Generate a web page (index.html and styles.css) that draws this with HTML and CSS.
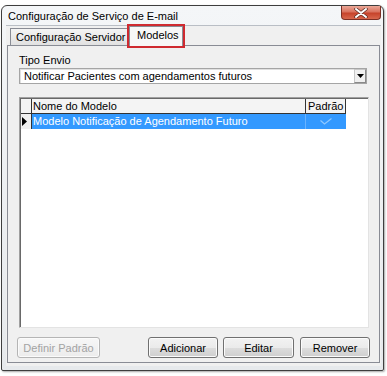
FILE: index.html
```html
<!DOCTYPE html>
<html>
  <head>
    <title>Configuração de Serviço de E-mail</title>
    <link rel="stylesheet" href="styles.css">
  </head>

  <body>
    <div class="window">
      <div class="titlebar">
        <span class="title">Configuração de Serviço de E-mail</span>
        <div class="close">
          <svg width="14" height="10" viewBox="0 0 14 10">
            <path d="M2 1 L12 9 M12 1 L2 9" stroke="#5a2a22" stroke-width="3.4" stroke-linecap="round" />
            <path d="M2 1 L12 9 M12 1 L2 9" stroke="#ffffff" stroke-width="2" stroke-linecap="round" />
          </svg>
        </div>
      </div>

      <div class="client">
        <div class="tabs">
          <div class="tab">Configuração Servidor</div>
          <div class="tab active">Modelos</div>
        </div>

        <div class="panel">
          <span class="field-label">Tipo Envio</span>
          <div class="select">
            <span class="select-text">Notificar Pacientes com agendamentos futuros</span>
            <div class="drop">
              <svg width="7" height="4" viewBox="0 0 7 4">
                <path d="M0 0 H7 L3.5 4 Z" fill="#000" />
              </svg>
            </div>
          </div>

          <div class="grid">
            <div class="grid-row header">
              <div class="cell ind"></div>
              <div class="cell name">Nome do Modelo</div>
              <div class="cell std">Padrão</div>
            </div>
            <div class="grid-row selected">
              <div class="cell ind">
                <svg width="5" height="9" viewBox="0 0 5 9">
                  <path d="M0 0 L5 4.5 L0 9 Z" fill="#000" />
                </svg>
              </div>
              <div class="cell name">Modelo Notificação de Agendamento Futuro</div>
              <div class="cell std">
                <svg width="12" height="7" viewBox="0 0 12 7">
                  <path d="M0.5 2.5 L4.5 6 L11.5 0.5" fill="none" stroke="#8fc8ff" stroke-width="1.2" />
                </svg>
              </div>
            </div>
          </div>

          <div class="buttons">
            <button class="btn btn-wide" disabled>Definir Padrão</button>
            <span class="spacer"></span>
            <button class="btn">Adicionar</button>
            <button class="btn btn-edit">Editar</button>
            <button class="btn btn-last">Remover</button>
          </div>
        </div>
      </div>
    </div>
  </body>
</html>
```

FILE: styles.css
```css
body {
  margin: 0;
  width: 387px;
  height: 376px;
  background: #ffffff;
  font-family: "Liberation Sans", Arial, sans-serif;
  font-size: 11px;
  color: #000;
  overflow: hidden;
}

.window {
  box-sizing: border-box;
  width: 383px;
  height: 366px;
  margin: 5px 0 0 1px;
  padding: 0 2px 4px 4px;
  border: 1px solid #3e3e3e;
  border-radius: 6px 6px 2px 2px;
  background: linear-gradient(#f4f6f8, #e6e9ec);
  box-shadow: 1px 1px 2px rgba(0, 0, 0, 0.35);
  display: flex;
  flex-direction: column;
}

.titlebar {
  height: 20px;
  display: flex;
  align-items: center;
  padding-left: 2px;
}

.title {
  font-size: 11px;
  padding-bottom: 1px;
}

.close {
  margin-left: auto;
  align-self: flex-start;
  width: 38px;
  height: 13px;
  border: 1px solid #7c2f24;
  border-top: none;
  border-radius: 0 0 4px 4px;
  background: linear-gradient(#eba898 0%, #d9725e 45%, #c6432b 55%, #d8674d 100%);
  display: flex;
  align-items: center;
  justify-content: center;
}

.client {
  flex: 1;
  display: flex;
  flex-direction: column;
  background: #f0f0f0;
  padding: 0 1px 3px 1px;
  box-shadow: 0 -1px 0 #b9bec5;
}

.tabs {
  height: 19px;
  display: flex;
  align-items: flex-end;
  padding-left: 3px;
}

.tab {
  box-sizing: border-box;
  height: 17px;
  width: 119px;
  padding-left: 5px;
  line-height: 16px;
  border: 1px solid #898c95;
  border-bottom: none;
  background: linear-gradient(#f4f4f4, #e1e1e1);
}

.tab.active {
  width: 54px;
  height: 20px;
  margin-bottom: -1px;
  padding-left: 7px;
  line-height: 17px;
  background: #f7f7f7;
  border-color: #898c95;
  position: relative;
  z-index: 1;
  outline: 2px solid #cf2a30;
  outline-offset: 0;
}

.panel {
  flex: 1;
  display: flex;
  flex-direction: column;
  border: 1px solid #898c95;
  padding: 8px 10px 4px 11px;
  background: #f0f0f0;
}

.field-label {
  display: block;
  line-height: 13px;
}

.select {
  box-sizing: border-box;
  width: 348px;
  height: 16px;
  margin-top: 1px;
  border: 1px solid #a5a5a5;
  box-shadow: inset 1px 1px 0 #e0e0e0;
  background: #fff;
  display: flex;
  align-items: center;
}

.select-text {
  padding-left: 4px;
  line-height: 14px;
}

.drop {
  margin-left: auto;
  box-sizing: border-box;
  width: 12px;
  height: 14px;
  border: 1px solid #c8c8c8;
  border-right-color: #8a8a8a;
  border-bottom-color: #8a8a8a;
  background: #f0f0f0;
  display: flex;
  align-items: center;
  justify-content: center;
}

.grid {
  box-sizing: border-box;
  height: 231px;
  margin-top: 13px;
  border: 1px solid;
  border-color: #a0a0a0 #e3e3e3 #e3e3e3 #a0a0a0;
  box-shadow: inset 1px 1px 0 #696969;
  padding: 1px 0 0 1px;
  background: #fff;
}

.grid-row {
  display: flex;
  height: 15px;
}

.cell {
  box-sizing: border-box;
  height: 15px;
  line-height: 14px;
  border-right: 1px solid #333;
  border-bottom: 1px solid #333;
  padding-left: 1px;
  white-space: nowrap;
}

.ind {
  width: 11px;
  background: #f0f0f0;
  display: flex;
  align-items: center;
  padding-left: 1px;
}

.name {
  width: 274px;
}

.std {
  width: 40px;
  padding-left: 2px;
}

.header .cell {
  background: #f4f4f4;
}

.selected .cell {
  border-bottom: none;
}

.selected .name,
.selected .std {
  background: #3399ff;
  color: #fff;
  border-right-color: #69b3ff;
}

.selected .std {
  border-right: none;
  display: flex;
  align-items: center;
  justify-content: center;
  padding-left: 0;
}

.buttons {
  display: flex;
  margin-top: 9px;
  margin-left: -2px;
  margin-right: -1px;
  gap: 5px;
}

.spacer {
  flex: 1;
}

.btn {
  box-sizing: border-box;
  width: 70px;
  height: 21px;
  padding: 0;
  font-family: "Liberation Sans", Arial, sans-serif;
  font-size: 11px;
  color: #000;
  border: 1px solid #707070;
  border-radius: 3px;
  background: linear-gradient(#f2f2f2 0%, #ebebeb 50%, #dddddd 51%, #cfcfcf 100%);
  box-shadow: inset 0 0 0 1px #fbfbfb;
}

.btn-wide {
  width: 83px;
}

.btn-edit {
  width: 71px;
}

.btn-last {
  margin-left: 1px;
}

.btn:disabled {
  color: #a3a3a3;
  border-color: #b5b5b5;
  background: linear-gradient(#f7f7f7, #ececec);
}
```
